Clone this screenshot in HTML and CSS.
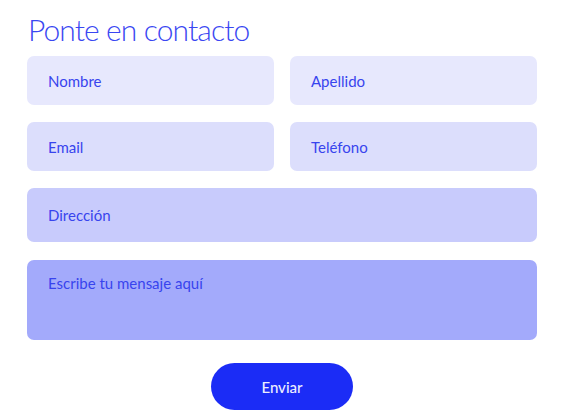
FILE: index.html
```html
<!DOCTYPE html>
<html lang="es">
<head>
<meta charset="utf-8">
<title>Ponte en contacto</title>
<link rel="stylesheet" href="styles.css">
</head>
<body>
<main class="contact">
  <h1 class="title">Ponte en contacto</h1>
  <form class="form">
    <div class="row two">
      <div class="field f1">Nombre</div>
      <div class="field f1">Apellido</div>
    </div>
    <div class="row two">
      <div class="field f2">Email</div>
      <div class="field f2">Teléfono</div>
    </div>
    <div class="row">
      <div class="field f3">Dirección</div>
    </div>
    <div class="row message">
      <div class="field f4 area">Escribe tu mensaje aquí</div>
    </div>
    <div class="actions">
      <button type="button" class="send">Enviar</button>
    </div>
  </form>
</main>
</body>
</html>
```

FILE: styles.css
```css
* { box-sizing: border-box; }
html, body { margin: 0; padding: 0; background: #ffffff; }
body { font-family: "Lato", "Open Sans", sans-serif; }

.contact {
  width: 510px;
  margin-left: 27px;
  padding-top: 10px;
}

.title {
  margin: 0 0 8px 0;
  font-family: "Lato", sans-serif;
  font-weight: 300;
  font-size: 30px;
  line-height: 38px;
  color: #3a47f2;
  letter-spacing: -0.9px;
  padding-left: 1px;
}

.form {
  display: flex;
  flex-direction: column;
  gap: 17px;
}

.row { display: flex; gap: 16px; }
.row .field { flex: 1; }
.row.message { margin-top: 1px; }

.field {
  height: 49px;
  border-radius: 7px;
  padding: 0 21px;
  display: flex;
  align-items: center;
  font-size: 15px;
  color: #3844ee;
}
.f1 { background: #e7e8fd; }
.f2 { background: #dcdefc; }
.f3 { background: #c8cbfc; height: 54px; }
.f4 { background: #a3aafb; }
.area {
  height: 80px;
  align-items: flex-start;
  padding-top: 14px;
}

.actions {
  display: flex;
  justify-content: center;
  padding-top: 6px;
}

.send {
  width: 142px;
  height: 47px;
  border: none;
  border-radius: 24px;
  background: #1b2cf6;
  color: #eceeff;
  font-family: "Lato", sans-serif;
  font-size: 15px;
  font-weight: 500;
}
```
